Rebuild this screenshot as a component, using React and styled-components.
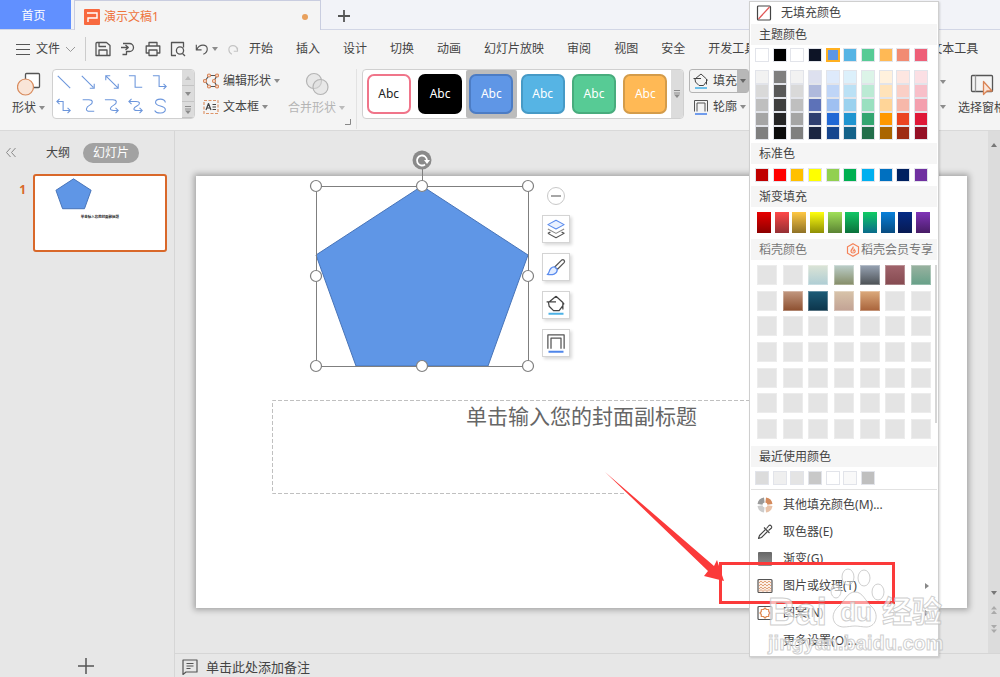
import styled, { createGlobalStyle } from 'styled-components';

const menuTabs = ['开始', '插入', '设计', '切换', '动画', '幻灯片放映', '审阅', '视图', '安全', '开发工具'];

const shapeStyles = [
  { fill: '#ffffff', line: '#f0758a', text: '#222222' },
  { fill: '#000000', line: '#000000', text: '#ffffff' },
  { fill: '#5f96e6', line: '#4c7cc4', text: '#ffffff', active: true },
  { fill: '#56b4e4', line: '#469ac6', text: '#ffffff' },
  { fill: '#57cb95', line: '#48ac7d', text: '#ffffff' },
  { fill: '#ffb955', line: '#d49c4a', text: '#ffffff' },
];

const connectors = [
  'M2 2l14 14',
  'M2 2l13 13M16 11v5h-5',
  'M2 2l14 14M2 7V2h5M16 11v5h-5',
  'M1 2h7v13h8',
  'M1 2h7v12h8M13 11l3 3-3 3',
  'M4 1l-3 3 3 3M1 4h7v10h8M13 11l3 3-3 3',
  'M3 2h7c5 0 5 4 1 6s-6 7 0 7h5',
  'M1 2h9c5 0 5 4 1 6s-6 6 0 6h5M13 11l3 3-3 3',
  'M4 1l-3 3 3 3M1 4h8c5 0 5 3 1 5s-5 5 0 5h6M13 11l3 3-3 3',
  'M15 5c0-5-11-5-11 0s11 3 11 8-10 5-12 1',
];

const themeColors = ['#ffffff', '#000000', '#ffffff', '#0d1426', '#5f96e6', '#56b4e4', '#57cb95', '#ffb955', '#f28b72', '#ee5f78'];

const themeShades = [
  ['#f2f2f2', '#7f7f7f', '#f2f2f2', '#dde0ef', '#deeafb', '#dcf0fb', '#dcf4e8', '#fff1dd', '#fde6e1', '#fbdfe4'],
  ['#d9d9d9', '#595959', '#d9d9d9', '#afb9dc', '#bfd5f7', '#bbe1f5', '#bbead4', '#ffe3ba', '#facfc6', '#f8bfc9'],
  ['#bfbfbf', '#3f3f3f', '#bfbfbf', '#5d72b8', '#9fc0f1', '#9ad2ef', '#9ae0c0', '#ffd598', '#f7b8aa', '#f49fae'],
  ['#a5a5a5', '#262626', '#a5a5a5', '#2f3f70', '#2168d5', '#2095d0', '#33a671', '#ff9800', '#eb4420', '#df1838'],
  ['#7f7f7f', '#0c0c0c', '#7f7f7f', '#1b2542', '#16458e', '#15638a', '#226e4b', '#aa6500', '#9e2b12', '#951026'],
];

const standardColors = ['#c00000', '#ff0000', '#ffc000', '#ffff00', '#92d050', '#00b050', '#00b0f0', '#0070c0', '#002060', '#7030a0'];

const gradients = [
  ['#e80000', '#8c0000'],
  ['#ff4848', '#953034'],
  ['#ffc843', '#8f7227'],
  ['#ffff10', '#8f8f05'],
  ['#a1e058', '#5b8434'],
  ['#12c766', '#0a713b'],
  ['#10cc62', '#0a6b8b'],
  ['#0880da', '#084b80'],
  ['#042b86', '#081a52'],
  ['#8034b8', '#481c66'],
];

const docerColors = {
  2: ['#dce4d6', '#aecdd4'],
  3: ['#bccfcb', '#858c66'],
  4: ['#98a4b4', '#4c5054'],
  5: ['#a1646c', '#854a50'],
  6: ['#9ab2a0', '#66a088'],
  8: ['#c29880', '#8c4e2e'],
  9: ['#1c5c78', '#0c344a'],
  10: ['#d8c4aa', '#c2a294'],
  11: ['#dcaa7c', '#a8623a'],
};

const recentColors = ['#dcdcdc', '#efefef', '#e4e4e4', '#c8c8c8', '#ffffff', '#f9f9f9', '#bfbfbf'];

const Caret = ({ color = '#8c8c8c', up }) => (
  <svg width="6" height="4" viewBox="0 0 6 4" aria-hidden="true">
    <path d={up ? 'M0 4h6L3 0z' : 'M0 0h6L3 4z'} fill={color} />
  </svg>
);

const MoreIcon = () => (
  <svg width="6" height="8" viewBox="0 0 6 8" aria-hidden="true">
    <path d="M0 .5h6M0 3h6" stroke="#8c8c8c" />
    <path d="M0 4.500h6L3 8z" fill="#8c8c8c" />
  </svg>
);

const Icon = ({ d, size = 16, color = '#555', width = 1.3, children }) => (
  <svg width={size} height={size} viewBox="0 0 16 16" fill="none" stroke={color} strokeWidth={width} strokeLinejoin="round" aria-hidden="true">
    {d && <path d={d} />}
    {children}
  </svg>
);

const BucketIcon = ({ size = 16 }) => (
  <Icon size={size} color="#444" width={1}>
    <path d="M.5 5.500H8M8 1l5.500 5v5.500M13.500 6l1 1.500M8 1L2 6l.5 3L6 12.500h4.500l3-4" />
    <path d="M2 15h12" stroke="#4db2e6" strokeWidth="1.600" />
  </Icon>
);

const OutlineIcon = ({ size = 16 }) => (
  <Icon size={size} color="#555" width={1}>
    <path d="M1.500 12.500v-11h13v11M4 12.500V4h8v8.500" />
    <path d="M2 15h12" stroke="#4f86ea" strokeWidth="1.600" />
  </Icon>
);

const TitleBar = () => (
  <TabStrip>
    <HomeTab type="button">首页</HomeTab>
    <DocTab>
      <svg width="16" height="16" viewBox="0 0 16 16" aria-hidden="true">
        <rect width="16" height="16" rx="1" fill="#f8693f" />
        <path d="M3 4h10v5H4v4" fill="none" stroke="#fff" strokeWidth="1.4" />
      </svg>
      <span>演示文稿1</span>
      <UnsavedDot />
    </DocTab>
    <NewTab type="button" aria-label="新建">
      <svg width="12" height="12" viewBox="0 0 12 12" aria-hidden="true">
        <path d="M6 0v12M0 6h12" stroke="#555" strokeWidth="1.800" />
      </svg>
    </NewTab>
  </TabStrip>
);

const MenuBar = () => (
  <MenuRow>
    <FileButton type="button">
      <svg width="14" height="11" viewBox="0 0 14 11" aria-hidden="true">
        <path d="M0 .5h14M0 5.500h14M0 10.500h14" stroke="#555" />
      </svg>
      文件
      <svg width="9" height="5" viewBox="0 0 9 5" fill="none" stroke="#999" aria-hidden="true">
        <path d="M0 0l4.500 4.500L9 0" />
      </svg>
    </FileButton>
    <QuickTools>
      <IconButton type="button" aria-label="保存">
        <Icon d="M1 2.500Q1 1.500 2 1.500h9.500l3.500 3V14.500H1zM4 1.500v4h7M4 14.500V9h8v5.500" />
      </IconButton>
      <IconButton type="button" aria-label="输出">
        <Icon d="M3 2.500h6.500a4 4 0 0 1 0 8h-3v3h-4M1 6.500h7M5.500 4l2.800 2.500L5.500 9" />
      </IconButton>
      <IconButton type="button" aria-label="打印">
        <Icon d="M4 5V1.500h8V5M4 12H1.200V5h13.600v7H12M4 9h8v5.500H4z" />
      </IconButton>
      <IconButton type="button" aria-label="打印预览">
        <Icon d="M6 14.500H1.500v-13h12v5M12.500 12.500l2.500 2.500">
          <circle cx="10" cy="9.500" r="3.600" />
        </Icon>
      </IconButton>
      <UndoButton type="button" aria-label="撤销">
        <Icon size={14} d="M1.500 3v6h6M2 8.500C5 2 14 2 14 8c0 3-2 5-4.500 6" />
        <Caret />
      </UndoButton>
      <IconButton type="button" aria-label="恢复" disabled>
        <Icon size={12} color="#c4c4c4" width={1.500} d="M14 6v5H9M14 10C13 1 2 2 2.500 9c0 3 2 5 4 6" />
      </IconButton>
    </QuickTools>
    <Tabs>
      {menuTabs.map((tab) => (
        <MenuTab key={tab} type="button">{tab}</MenuTab>
      ))}
    </Tabs>
    <ContextTab type="button">文本工具</ContextTab>
  </MenuRow>
);

const FillMenu = () => (
  <Popup>
    <NoFill type="button">
      <Icon color="#444" width={1.2}>
        <rect x="1.500" y="1" width="13" height="14" rx="1" />
        <path d="M2.500 14L13.500 2" stroke="#e05555" />
      </Icon>
      无填充颜色
    </NoFill>
    <SectionTitle>主题颜色</SectionTitle>
    <SwatchRow $pad="3px 9px 0 4px">
      {themeColors.map((color, i) => (
        <Swatch key={i} type="button" aria-label={color} $color={color} $active={i === 4} />
      ))}
    </SwatchRow>
    <SwatchRow $pad="8px 9px 3px 4px">
      {themeShades.flat().map((color, i) => (
        <Swatch key={i} type="button" aria-label={color} $color={color} />
      ))}
    </SwatchRow>
    <SectionTitle>标准色</SectionTitle>
    <SwatchRow $pad="4px 9px 4px 4px">
      {standardColors.map((color) => (
        <Swatch key={color} type="button" aria-label={color} $color={color} />
      ))}
    </SwatchRow>
    <SectionTitle>渐变填充</SectionTitle>
    <SwatchRow $pad="5px 7px 6px 6px">
      {gradients.map(([from, to]) => (
        <GradientSwatch key={from} type="button" aria-label={from} $from={from} $to={to} />
      ))}
    </SwatchRow>
    <SectionTitle $muted>
      稻壳颜色
      <Member href="#docer">
        <svg width="14" height="14" viewBox="0 0 14 14" fill="none" stroke="#f58258" strokeWidth="1.200" aria-hidden="true">
          <path d="M7 .8l5.500 3v6.400L7 13.200l-5.500-3V3.800z" />
          <path d="M7.200 3.500c.3 2-2.500 3-2.200 5 .2 2 4 2 4.200 0 .1-1-.5-1.500-1-2-.2 1-.8 1.500-1.500 2" />
        </svg>
        稻壳会员专享
      </Member>
    </SectionTitle>
    <DocerArea>
      <DocerGrid>
        {Array.from({ length: 49 }, (_, i) => {
          const [from, to] = docerColors[i] || ['#e4e4e4', '#e4e4e4'];
          return <DocerSwatch key={i} type="button" aria-label={`颜色 ${i + 1}`} $from={from} $to={to} />;
        })}
      </DocerGrid>
      <DocerScroll />
    </DocerArea>
    <SectionTitle>最近使用颜色</SectionTitle>
    <SwatchRow $pad="4px 9px 4px 4px">
      {recentColors.map((color) => (
        <Swatch key={color} type="button" aria-label={color} $color={color} />
      ))}
    </SwatchRow>
    <MenuItems>
      <MenuItem type="button">
        <Icon width={5}>
          <path d="M7.300 3A5 5 0 0 0 3 7.300" stroke="#9a9a9a" />
          <path d="M8.700 3A5 5 0 0 1 13 7.300" stroke="#d48a5c" />
          <path d="M13 8.700A5 5 0 0 1 8.700 13" stroke="#e8c2a8" />
          <path d="M7.300 13A5 5 0 0 1 3 8.700" stroke="#cccccc" />
        </Icon>
        其他填充颜色(M)...
      </MenuItem>
      <MenuItem type="button">
        <Icon color="#444" width={1.1}>
          <path d="M8.500 5.500l-6 6L1.500 14.500l3-1 6-6" />
          <path d="M7 3.500l5.500 5.500M9.500 4.500L12 1.500c1.500-1 3.500 1 2.500 2.500l-3 2.500" />
        </Icon>
        取色器(E)
      </MenuItem>
      <MenuItem type="button">
        <svg width="16" height="16" viewBox="0 0 16 16" aria-hidden="true">
          <defs>
            <linearGradient id="grey" x1="0" y1="0" x2="0" y2="1">
              <stop offset="0" stopColor="#666" />
              <stop offset="1" stopColor="#909090" />
            </linearGradient>
          </defs>
          <rect x="1" y="1" width="14" height="14" rx="1" fill="url(#grey)" />
        </svg>
        渐变(G)
      </MenuItem>
      <MenuItem type="button">
        <Icon color="#e0a27c" width={1}>
          <rect x="1" y="1.500" width="14" height="13" rx="1" fill="#fbeee6" stroke="#555" strokeWidth="1.200" />
          <path d="M2 5l2-2 2 2 2-2 2 2 2-2 2 2M2 8l2-2 2 2 2-2 2 2 2-2 2 2M2 11l2-2 2 2 2-2 2 2 2-2 2 2M2 13.500l2-2 2 2 2-2 2 2 2-2 2 2" />
        </Icon>
        图片或纹理(T)
        <SubArrow />
        <Highlight />
        <Pointer width="120" height="112" viewBox="0 0 120 112" aria-hidden="true">
          <path d="M0 0L109 94l3-6 7 21-20-5 4-5z" fill="#fb3a3a" />
        </Pointer>
      </MenuItem>
      <MenuItem type="button">
        <Icon color="#555" width={1.2}>
          <rect x="1" y="1.500" width="14" height="13" rx="1" />
          <path d="M8 3l1.500 1.500h2.200v2L13 8l-1.300 1.500v2H9.500L8 13l-1.500-1.500H4.300v-2L3 8l1.300-1.500v-2h2.200z" stroke="#e08a52" />
        </Icon>
        图案(N)
        <SubArrow />
      </MenuItem>
      <MenuItem type="button" $last>更多设置(O)...</MenuItem>
    </MenuItems>
    <Watermark>
      <Paw width="56" height="62" viewBox="0 0 56 62" aria-hidden="true">
        <ellipse cx="18" cy="9" rx="6" ry="8" />
        <ellipse cx="34" cy="10" rx="6" ry="8" />
        <ellipse cx="6" cy="23" rx="5" ry="7" />
        <ellipse cx="48" cy="24" rx="6" ry="8" />
        <path d="M25 24c8 0 10 9 17 15 7 7 5 19-5 20-5 0-8-1-12-1s-7 1-12 1C2 58 0 46 8 39c7-6 9-15 17-15z" />
      </Paw>
      <Brand>
        <span>Bai</span>
        <BrandSmall>du</BrandSmall>
        <BrandCn>经验</BrandCn>
      </Brand>
      <BrandUrl>jingyan.baidu.com</BrandUrl>
    </Watermark>
  </Popup>
);

const Toolbar = () => (
  <ToolRow>
    <TallButton type="button">
      <svg width="24" height="24" viewBox="0 0 24 24" aria-hidden="true">
        <rect x="8.500" y="1.500" width="14" height="14" rx="1" fill="#fff" stroke="#555" strokeWidth="1.300" />
        <circle cx="8.500" cy="15" r="8" fill="#f9e5d8" stroke="#d88a5c" strokeWidth="1.200" />
      </svg>
      <Label>形状<Caret /></Label>
    </TallButton>
    <ConnectorBox>
      <ConnectorGrid>
        {connectors.map((d) => (
          <svg key={d} width="16" height="16" viewBox="0 0 18 18" fill="none" stroke="#6c96dc" strokeWidth="1.200" aria-hidden="true">
            <path d={d} />
          </svg>
        ))}
      </ConnectorGrid>
      <Stepper>
        <StepButton type="button" aria-label="上一行"><Caret up color="#bbb" /></StepButton>
        <StepButton type="button" aria-label="下一行"><Caret /></StepButton>
        <StepButton type="button" aria-label="更多形状"><MoreIcon /></StepButton>
      </Stepper>
    </ConnectorBox>
    <EditColumn>
      <RowButton type="button">
        <Icon color="#555" width={1.2} d="M6 2.500h8L11 8l3 5.500H6L2 8z">
          <g fill="#fbeee6" stroke="#d98456">
            <circle cx="6" cy="2.500" r="1.500" />
            <circle cx="14" cy="2.500" r="1.500" />
            <circle cx="2" cy="8" r="1.500" />
            <circle cx="11" cy="8" r="1.500" />
            <circle cx="6" cy="13.500" r="1.500" />
            <circle cx="14" cy="13.500" r="1.500" />
          </g>
        </Icon>
        <Label>编辑形状<Caret /></Label>
      </RowButton>
      <RowButton type="button">
        <Icon color="#444" width={1.2}>
          <rect x="1" y="1.500" width="14" height="13" stroke="#dd9468" strokeDasharray="3 1.500" />
          <path d="M3 11l2.500-6.500L8 11M4 9h3M9.500 5.500H13M9.500 8H13M9.500 10.500H13" />
        </Icon>
        <Label>文本框<Caret /></Label>
      </RowButton>
    </EditColumn>
    <TallButton type="button" disabled>
      <svg width="24" height="24" viewBox="0 0 24 24" fill="#dcdcdc" fillOpacity=".5" stroke="#b4b4b4" strokeWidth="1.200" aria-hidden="true">
        <circle cx="9" cy="9" r="7.500" />
        <circle cx="15.500" cy="15" r="7.500" />
      </svg>
      <Label>合并形状<Caret color="#bbb" /></Label>
    </TallButton>
    <Launcher>
      <svg width="6" height="6" viewBox="0 0 6 6" aria-hidden="true">
        <path d="M5.500 0v5.500H0" fill="none" stroke="#888" />
      </svg>
    </Launcher>
    <StyleBox>
      <StyleList>
        {shapeStyles.map((item) => (
          <StyleSlot key={item.fill} type="button" $active={item.active}>
            <StyleSample $item={item}>Abc</StyleSample>
          </StyleSlot>
        ))}
      </StyleList>
      <StyleMore type="button" aria-label="更多样式"><MoreIcon /></StyleMore>
    </StyleBox>
    <FillColumn>
      <FillButton type="button">
        <BucketIcon />
        <span>填充</span>
        <FillArrow><Caret color="#666" /></FillArrow>
      </FillButton>
      <OutlineButton type="button">
        <OutlineIcon />
        <Label>轮廓<Caret /></Label>
      </OutlineButton>
      <FillMenu />
    </FillColumn>
    <CaretColumn>
      <Caret />
      <Caret />
    </CaretColumn>
    <TallButton type="button">
      <svg width="24" height="24" viewBox="0 0 24 24" fill="none" stroke="#555" strokeWidth="1.300" strokeLinejoin="round" aria-hidden="true">
        <rect x="1.500" y="3.500" width="21" height="16" rx="1" />
        <path d="M5.500 3.500v16" stroke="#999" />
        <path d="M13.500 9.500v13l3.500-3.500h5z" fill="#fbe6da" stroke="#d98456" />
      </svg>
      <Label>选择窗格</Label>
    </TallButton>
  </ToolRow>
);

const Sidebar = () => (
  <Side>
    <SideTabs>
      <IconButton type="button" aria-label="收起">
        <svg width="10" height="9" viewBox="0 0 10 9" fill="none" stroke="#888" aria-hidden="true">
          <path d="M4.500 0L.5 4.500l4 4.500M9.500 0l-4 4.500 4 4.500" />
        </svg>
      </IconButton>
      <OutlineTab type="button">大纲</OutlineTab>
      <SlideTab type="button">幻灯片</SlideTab>
    </SideTabs>
    <ThumbRow>
      <ThumbNumber>1</ThumbNumber>
      <Thumb>
        <svg viewBox="0 0 771 433" width="100%" role="img" aria-label="幻灯片 1">
          <path d="M226 11l106 69-40 111H160L120 80z" fill="#5f96e6" stroke="#4874b8" strokeWidth="6" />
          <text x="385" y="250" textAnchor="middle" fontSize="21" fontWeight="700" fill="#222">单击输入您的封面副标题</text>
        </svg>
      </Thumb>
    </ThumbRow>
    <AddSlide type="button" aria-label="新建幻灯片">
      <svg width="16" height="16" viewBox="0 0 16 16" aria-hidden="true">
        <path d="M8 0v16M0 8h16" stroke="#555" strokeWidth="1.500" />
      </svg>
    </AddSlide>
  </Side>
);

const Handles = () => (
  <g fill="#fff" stroke="#7f7f7f" strokeWidth="1.200">
    {[[0, 0], [106, 0], [212, 0], [0, 90], [212, 90], [0, 180], [106, 180], [212, 180]].map(([x, y]) => (
      <circle key={`${x}-${y}`} cx={x + 10} cy={y + 36} r="5.500" />
    ))}
  </g>
);

const Editor = () => (
  <EditorArea>
    <Stage>
      <Canvas>
        <Slide>
          <ShapeBox width="232" height="226" viewBox="0 0 232 226" role="img" aria-label="五边形">
            <path d="M116 36l106 69-40 111H50L10 105z" fill="#5f96e6" stroke="#4874b8" />
            <path d="M10.500 36.500h212v180h-212z" fill="none" stroke="#7f7f7f" />
            <path d="M116.500 12v24" stroke="#7f7f7f" />
            <circle cx="116" cy="10" r="9.500" fill="#8a8a8a" />
            <path d="M119 14.500a5 5 0 1 1 2-4" fill="none" stroke="#fff" strokeWidth="1.800" />
            <path d="M118 10h6l-3 4z" fill="#fff" />
            <Handles />
          </ShapeBox>
          <FloatTools>
            <CollapseButton type="button" aria-label="收起工具">
              <svg width="10" height="2" viewBox="0 0 10 2" aria-hidden="true">
                <path d="M0 1h10" stroke="#888" strokeWidth="1.500" />
              </svg>
            </CollapseButton>
            <FloatButton type="button" aria-label="叠放次序">
              <Icon size={20} color="#555" width={.9}>
                <path d="M1.500 11.500L8 15l6.500-3.500-2-1M1.500 11.500l2-1" />
                <path d="M1.500 8L8 11.500 14.500 8" stroke="#888" />
                <path d="M8 1l6.500 3.500L8 8 1.500 4.500z" stroke="#5b8cee" fill="#eaf1ff" />
              </Icon>
            </FloatButton>
            <FloatButton type="button" aria-label="形状样式">
              <Icon size={20} color="#555" width={1}>
                <path d="M7 8l5.500-5.500c1.500-1 3 .5 2 2L9 10z" />
                <path d="M7 8l2 2c0 4-4 4.500-8 4 2-1 1-3 3-5 1-1 2-1.200 3-1z" stroke="#5b8cee" fill="#e3edff" />
              </Icon>
            </FloatButton>
            <FloatButton type="button" aria-label="形状填充"><BucketIcon size={20} /></FloatButton>
            <FloatButton type="button" aria-label="形状轮廓"><OutlineIcon size={20} /></FloatButton>
          </FloatTools>
          <Subtitle>
            <SubtitleFrame aria-hidden="true">
              <path d="M352 93.500H.5V.5H617" fill="none" stroke="#c0c0c0" strokeDasharray="4 2" />
            </SubtitleFrame>
            单击输入您的封面副标题
          </Subtitle>
        </Slide>
      </Canvas>
      <ScrollBar>
        <Caret up color="#777" />
        <ScrollEnd>
          <Caret color="#777" />
          <svg width="6" height="8" viewBox="0 0 6 8" aria-hidden="true"><path d="M0 3.500h6L3 0zM0 8h6L3 4.500z" fill="#aaa" /></svg>
          <svg width="6" height="8" viewBox="0 0 6 8" aria-hidden="true"><path d="M0 0h6L3 3.500zM0 4.500h6L3 8z" fill="#aaa" /></svg>
        </ScrollEnd>
      </ScrollBar>
    </Stage>
    <Notes type="button">
      <Icon color="#555" width={1.200} d="M1 1h14v12H4l-3 2.500zM4.500 4.500h7M4.500 7h7M4.500 9.500h4" />
      单击此处添加备注
    </Notes>
  </EditorArea>
);

const App = () => {
  return (
    <Page>
      <GlobalStyle />
      <TitleBar />
      <Ribbon>
        <MenuBar />
        <Toolbar />
      </Ribbon>
      <Workspace>
        <Sidebar />
        <Editor />
      </Workspace>
    </Page>
  );
};

const GlobalStyle = createGlobalStyle`
  * {
    box-sizing: border-box;
  }
  body {
    margin: 0;
    font-family: 'Noto Sans', 'Noto Sans CJK SC', sans-serif;
    font-size: 12px;
    line-height: 16px;
    color: #444;
  }
  button {
    padding: 0;
    border: 0;
    background: none;
    font: inherit;
    color: inherit;
    white-space: nowrap;
  }
  svg {
    display: block;
    flex-shrink: 0;
  }
`;

const Page = styled.div`
  display: flex;
  flex-direction: column;
  min-height: 100vh;
  overflow: hidden;
`;

const TabStrip = styled.header`
  display: flex;
  height: 30px;
  background: #f2f3f8;
  border-bottom: 1px solid #d2d6e6;
`;

const HomeTab = styled.button`
  width: 71px;
  padding: 2px 4px 0 0;
  background: #6190ff;
  color: #fff;
`;

const DocTab = styled.div`
  display: flex;
  align-items: center;
  gap: 4px;
  width: 247px;
  height: 30px;
  margin-left: 3px;
  padding: 3px 12px 0 9px;
  background: #f4f4f4;
  border: 1px solid #c9cde0;
  border-bottom: 0;
  color: #ee733c;
`;

const UnsavedDot = styled.i`
  width: 6px;
  height: 6px;
  margin-left: auto;
  border-radius: 50%;
  background: #e8a05c;
`;

const NewTab = styled.button`
  display: flex;
  align-items: center;
  padding: 2px 17px 0;
`;

const Ribbon = styled.section`
  background: #f4f4f4;
  border-bottom: 1px solid #d9d9d9;
`;

const MenuRow = styled.nav`
  display: flex;
  align-items: center;
  height: 36px;
  padding: 2px 0 0 16px;
`;

const FileButton = styled.button`
  display: flex;
  align-items: center;
  gap: 6px;
  height: 24px;
  padding-right: 10px;
  border-right: 1px solid #ccc;
`;

const QuickTools = styled.div`
  display: flex;
  flex-shrink: 0;
  align-items: center;
  gap: 9px;
  width: 152px;
  margin-left: 9px;
`;

const IconButton = styled.button`
  display: flex;
`;

const UndoButton = styled(IconButton)`
  align-items: center;
  gap: 3px;
`;

const Tabs = styled.div`
  display: flex;
  gap: 23px;
  margin-left: 2px;
`;

const MenuTab = styled.button`
  flex-shrink: 0;
`;

const ContextTab = styled(MenuTab)`
  margin-left: 174px;
`;

const ToolRow = styled.div`
  display: flex;
  align-items: flex-start;
  height: 64px;
  padding: 3px 0 0 12px;
`;

const TallButton = styled.button`
  display: flex;
  flex-direction: column;
  flex-shrink: 0;
  align-items: center;
  gap: 4px;
  padding-top: 3px;
  &:disabled {
    color: #b4b4b4;
  }
`;

const Label = styled.span`
  display: flex;
  align-items: center;
  gap: 3px;
`;

const ConnectorBox = styled.div`
  display: flex;
  flex-shrink: 0;
  width: 143px;
  height: 50px;
  margin-left: 7px;
  background: #fff;
  border: 1px solid #d0d0d0;
  border-radius: 4px;
  overflow: hidden;
`;

const ConnectorGrid = styled.div`
  display: grid;
  flex: 1;
  grid-template-columns: repeat(5, 16px);
  align-content: space-around;
  justify-content: space-between;
  padding: 0 14px 0 3px;
`;

const Stepper = styled.div`
  display: flex;
  flex-direction: column;
  width: 12px;
  background: #dcdcdc;
`;

const StepButton = styled.button`
  display: flex;
  flex: 1;
  align-items: center;
  justify-content: center;
  border-bottom: 1px solid #c4c4c4;
`;

const EditColumn = styled.div`
  display: flex;
  flex-direction: column;
  flex-shrink: 0;
  gap: 10px;
  padding: 4px 8px 0;
`;

const RowButton = styled.button`
  display: flex;
  align-items: center;
  gap: 4px;
`;

const Launcher = styled.div`
  display: flex;
  flex-shrink: 0;
  align-items: flex-end;
  width: 12px;
  height: 60px;
  padding-bottom: 4px;
  border-right: 1px solid #e2e2e2;
`;

const StyleBox = styled.div`
  display: flex;
  flex-shrink: 0;
  width: 322px;
  height: 50px;
  margin-left: 5px;
  background: #fff;
  border: 1px solid #d0d0d0;
  border-radius: 4px;
  overflow: hidden;
`;

const StyleList = styled.div`
  display: flex;
  flex: 1;
`;

const StyleSlot = styled.button`
  display: flex;
  flex: 1;
  align-items: center;
  justify-content: center;
  border-radius: 2px;
  background: ${({ $active }) => ($active ? '#bcbcbc' : 'transparent')};
`;

const StyleSample = styled.span`
  width: 44px;
  padding: 10px 0;
  background: ${({ $item }) => $item.fill};
  border: 2px solid ${({ $item }) => $item.line};
  border-radius: 7px;
  color: ${({ $item }) => $item.text};
`;

const StyleMore = styled.button`
  display: flex;
  align-items: center;
  justify-content: center;
  width: 12px;
  background: #dcdcdc;
`;

const FillColumn = styled.div`
  position: relative;
  flex-shrink: 0;
  width: 60px;
  margin-left: 5px;
`;

const FillButton = styled.button`
  display: flex;
  align-items: center;
  gap: 4px;
  width: 60px;
  height: 24px;
  padding-left: 3px;
  border: 1px solid #b4b4b4;
  border-radius: 3px;
`;

const FillArrow = styled.i`
  display: flex;
  flex: 1;
  align-items: center;
  align-self: stretch;
  justify-content: center;
  margin-left: -4px;
  background: #b8b8b8;
`;

const OutlineButton = styled(RowButton)`
  padding: 6px 0 0 4px;
`;

const CaretColumn = styled.div`
  display: flex;
  flex-direction: column;
  flex-shrink: 0;
  gap: 21px;
  margin: 11px 12px 0 191px;
`;

const Popup = styled.div`
  position: absolute;
  z-index: 5;
  top: -68px;
  left: 60px;
  width: 190px;
  padding: 0 1px;
  background: #fff;
  border: 1px solid #cfcfcf;
  box-shadow: 1px 1px 2px rgba(0, 0, 0, 0.15);
`;

const NoFill = styled.button`
  display: flex;
  align-items: center;
  gap: 9px;
  width: 100%;
  height: 22px;
  padding-left: 5px;
`;

const SectionTitle = styled.div`
  display: flex;
  align-items: center;
  justify-content: space-between;
  height: 21px;
  padding: 0 4px 0 8px;
  background: #f5f5f5;
  color: ${({ $muted }) => ($muted ? '#777' : '#444')};
`;

const SwatchRow = styled.div`
  display: grid;
  grid-template-columns: repeat(10, 14px);
  justify-content: space-between;
  padding: ${({ $pad }) => $pad};
`;

const Swatch = styled.button`
  height: 14px;
  background: ${({ $color }) => $color};
  border: ${({ $active }) => ($active ? '2px solid #ffb020' : '1px solid #e2e4ea')};
`;

const GradientSwatch = styled.button`
  height: 21px;
  background: linear-gradient(${({ $from, $to }) => `${$from}, ${$to}`});
`;

const Member = styled.a`
  display: flex;
  align-items: center;
  gap: 1px;
  color: inherit;
  text-decoration: none;
`;

const DocerArea = styled.div`
  display: flex;
  gap: 4px;
  padding: 5px 0 7px 6px;
`;

const DocerGrid = styled.div`
  display: grid;
  flex: 1;
  grid-template-columns: repeat(7, 20px);
  grid-auto-rows: 20px;
  align-content: space-between;
  justify-content: space-between;
  height: 174px;
`;

const DocerSwatch = styled.button`
  background: linear-gradient(${({ $from, $to }) => `${$from}, ${$to}`}) border-box;
  border: 1px solid rgba(255, 255, 255, 0.3);
`;

const DocerScroll = styled.i`
  width: 2px;
  height: 158px;
  background: #d6d6d6;
`;

const MenuItems = styled.div`
  padding-top: 1px;
  border-top: 1px solid #e2e2e2;
`;

const MenuItem = styled.button`
  position: relative;
  display: flex;
  align-items: center;
  gap: 10px;
  width: 100%;
  height: ${({ $last }) => ($last ? '30px' : '27px')};
  padding: 0 8px 0 ${({ $last }) => ($last ? '32px' : '6px')};
`;

const SubArrow = styled.i`
  margin-left: auto;
  border: 3px solid transparent;
  border-right: 0;
  border-left: 4px solid #888;
`;

/* frame and pointer drawn over the texture entry */
const Highlight = styled.span`
  position: absolute;
  z-index: 1;
  inset: -10px 42px -5px -32px;
  border: 3px solid #fb3a3a;
`;

const Pointer = styled.svg`
  position: absolute;
  top: -100px;
  left: -146px;
`;

const Watermark = styled.div`
  position: absolute;
  z-index: 2;
  bottom: 0;
  left: 18px;
  width: 180px;
  font-family: 'Liberation Sans', 'Noto Sans CJK SC', sans-serif;
  font-weight: 700;
  white-space: nowrap;
  color: rgba(255, 255, 255, 0.65);
  -webkit-text-stroke: 1px rgba(190, 190, 190, 0.75);
  pointer-events: none;
`;

const Paw = styled.svg`
  position: absolute;
  top: -26px;
  left: 62px;
  fill: rgba(255, 255, 255, 0.5);
  stroke: rgba(190, 190, 190, 0.75);
`;

const Brand = styled.div`
  position: relative;
  display: flex;
  align-items: center;
  height: 36px;
  font-size: 38px;
`;

const BrandSmall = styled.span`
  margin-left: 13px;
  font-size: 26px;
`;

const BrandCn = styled.span`
  margin-left: 10px;
  font-size: 30px;
`;

const BrandUrl = styled.div`
  font-size: 20px;
  line-height: 26px;
`;

const Workspace = styled.main`
  display: flex;
  flex: 1;
  background: #e7e7e7;
`;

const Side = styled.aside`
  display: flex;
  flex-direction: column;
  width: 175px;
  border-right: 1px solid #d6d6d6;
`;

const SideTabs = styled.div`
  display: flex;
  align-items: center;
  height: 43px;
  padding-left: 6px;
`;

const OutlineTab = styled.button`
  margin: 0 13px 0 30px;
`;

const SlideTab = styled.button`
  height: 20px;
  padding: 0 10px;
  border-radius: 10px;
  background: #a2a2a2;
  color: #fff;
`;

const ThumbRow = styled.div`
  display: flex;
  padding-right: 7px;
`;

const ThumbNumber = styled.span`
  width: 33px;
  padding: 8px 7px 0 0;
  text-align: right;
  font-weight: 700;
  color: #d9682a;
`;

const Thumb = styled.div`
  flex: 1;
  padding: 1px;
  background: #fff;
  border: 2px solid #d9682a;
  border-radius: 3px;
`;

const AddSlide = styled.button`
  display: flex;
  justify-content: center;
  margin-top: auto;
  padding: 0 2px 3px 0;
`;

const EditorArea = styled.section`
  display: flex;
  flex: 1;
  flex-direction: column;
`;

const Stage = styled.div`
  display: flex;
  flex: 1;
`;

const Canvas = styled.div`
  display: flex;
  flex: 1;
  padding: 45px 21px;
`;

const Slide = styled.div`
  position: relative;
  flex: 1;
  background: #fff;
  box-shadow: 0 0 6px 2px rgba(0, 0, 0, 0.3);
`;

const ShapeBox = styled.svg`
  position: absolute;
  top: -26px;
  left: 110px;
`;

const FloatTools = styled.div`
  position: absolute;
  top: 11px;
  left: 346px;
  display: flex;
  flex-direction: column;
  align-items: center;
  gap: 10px;
`;

const CollapseButton = styled.button`
  display: flex;
  align-items: center;
  justify-content: center;
  width: 18px;
  height: 18px;
  border: 1px solid #c8c8c8;
  border-radius: 50%;
`;

const FloatButton = styled.button`
  display: flex;
  align-items: center;
  justify-content: center;
  width: 28px;
  height: 28px;
  background: #fff;
  border: 1px solid #d4d4d4;
  box-shadow: 2px 2px 3px rgba(0, 0, 0, 0.15);
`;

const Subtitle = styled.div`
  position: absolute;
  top: 224px;
  right: 76px;
  left: 76px;
  height: 94px;
  text-align: center;
  font-size: 21px;
  line-height: 32px;
  color: #666;
`;

const SubtitleFrame = styled.svg`
  position: absolute;
  top: 0;
  left: 0;
  width: 100%;
  height: 100%;
`;

const ScrollBar = styled.div`
  display: flex;
  flex-direction: column;
  align-items: center;
  justify-content: space-between;
  width: 12px;
  padding: 12px 0 20px;
  background: #dcdcdc;
`;

const ScrollEnd = styled.div`
  display: flex;
  flex-direction: column;
  gap: 11px;
`;

const Notes = styled.button`
  display: flex;
  align-items: center;
  gap: 8px;
  height: 24px;
  padding: 3px 0 0 7px;
  border-top: 1px solid #d6d6d6;
  font-size: 13px;
`;

export default App;
